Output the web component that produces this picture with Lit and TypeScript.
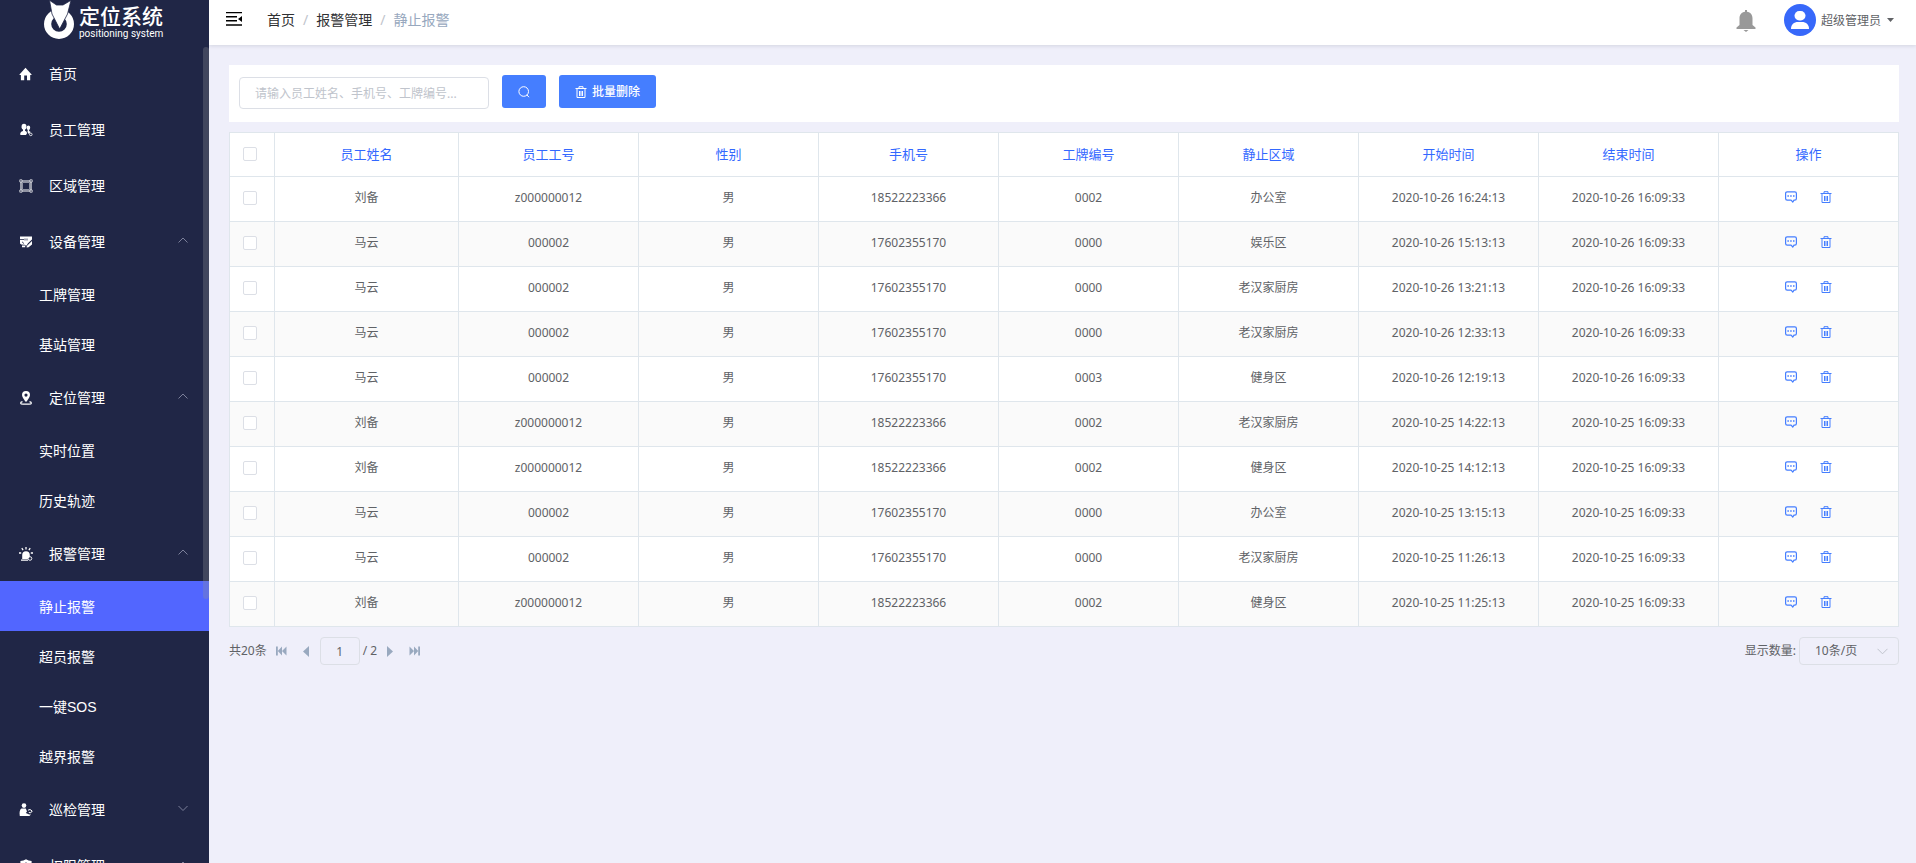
import { LitElement, html, css, svg, nothing } from "lit";
import { customElement, state } from "lit/decorators.js";
import { classMap } from "lit/directives/class-map.js";

interface Menu { label: string; icon: string; open?: boolean; children?: string[]; group?: boolean }

const MENUS: Menu[] = [
  { label: "首页", icon: "home" },
  { label: "员工管理", icon: "staff" },
  { label: "区域管理", icon: "area" },
  { label: "设备管理", icon: "device", group: true, open: true, children: ["工牌管理", "基站管理"] },
  { label: "定位管理", icon: "pin", group: true, open: true, children: ["实时位置", "历史轨迹"] },
  { label: "报警管理", icon: "alarm", group: true, open: true, children: ["静止报警", "超员报警", "一键SOS", "越界报警"] },
  { label: "巡检管理", icon: "patrol", group: true },
  { label: "权限管理", icon: "shield", group: true, open: true },
];

const COLUMNS = ["员工姓名", "员工工号", "性别", "手机号", "工牌编号", "静止区域", "开始时间", "结束时间"];

const liu = ["刘备", "z000000012", "男", "18522223366"];
const ma = ["马云", "000002", "男", "17602355170"];
const ROWS: string[][] = [
  [...liu, "0002", "办公室", "2020-10-26 16:24:13", "2020-10-26 16:09:33"],
  [...ma, "0000", "娱乐区", "2020-10-26 15:13:13", "2020-10-26 16:09:33"],
  [...ma, "0000", "老汉家厨房", "2020-10-26 13:21:13", "2020-10-26 16:09:33"],
  [...ma, "0000", "老汉家厨房", "2020-10-26 12:33:13", "2020-10-26 16:09:33"],
  [...ma, "0003", "健身区", "2020-10-26 12:19:13", "2020-10-26 16:09:33"],
  [...liu, "0002", "老汉家厨房", "2020-10-25 14:22:13", "2020-10-25 16:09:33"],
  [...liu, "0002", "健身区", "2020-10-25 14:12:13", "2020-10-25 16:09:33"],
  [...ma, "0000", "办公室", "2020-10-25 13:15:13", "2020-10-25 16:09:33"],
  [...ma, "0000", "老汉家厨房", "2020-10-25 11:26:13", "2020-10-25 16:09:33"],
  [...liu, "0002", "健身区", "2020-10-25 11:25:13", "2020-10-25 16:09:33"],
];

const GLYPHS: Record<string, unknown> = {
  home: svg`<path fill="currentColor" d="M6.500.8 12.600 7.400V8H11.200v5.200H8V8.600H5.200v4.600H1.900V8H.5V7.400Z"/>`,
  staff: svg`<g fill="currentColor"><ellipse cx="5" cy="3.8" rx="2.500" ry="3"/><path d="M4 6h2v1.800c1.400.6 2 1.400 2 2.400L7 12H1.400C.8 9.600 1.800 8.600 4 7.900Z"/><ellipse cx="9.400" cy="4.800" rx="1.800" ry="2.200"/><path d="M8.900 6.400h1.200v1.600l1.600.9-2 2-1.200-2Z"/></g><circle cx="11.800" cy="11.400" r="1.300" fill="none" stroke="currentColor" stroke-width=".8"/>`,
  area: svg`<g fill="none" stroke="currentColor"><path d="M3 2h8M3 12h8M2 3v8M12 3v8" stroke-width="1.100"/><path d="M3.500 3.500h7v7h-7z" stroke-width=".5"/><path d="M.8.8h2.200v2.200H.8zM11 .8h2.200v2.200H11zM.8 11h2.200v2.200H.8zM11 11h2.200v2.200H11z" stroke-width=".7"/></g>`,
  device: svg`<path fill="currentColor" d="M1 1.500h12v3L9 8.200 7.600 10.600H6.800L5.600 9.800 2.200 9.600 1 8.400ZM13 6v3.400L9.600 12.200 7.600 12.600l.2-1.600ZM3 10.600h3.200v1.600H3Z"/><path stroke="#202646" stroke-width=".8" fill="none" d="M1 4.500h4M6 3.500v2M8 3.500v2M3 6.800l2 1.800"/>`,
  pin: svg`<path fill="currentColor" fill-rule="evenodd" d="M7 0a4 4 0 0 1 4 4C11 6.600 8.400 8.600 7.800 10.600H6.200C5.600 8.600 3 6.600 3 4A4 4 0 0 1 7 0Zm0 2.500a1.600 1.600 0 1 0 0 3.200 1.600 1.600 0 0 0 0-3.200Z"/><path fill="none" stroke="currentColor" stroke-width="1.200" d="M3.500 10.600c-2.600.7-2.600 2.400.5 2.600h6c3.100-.2 3.100-1.900.5-2.600"/>`,
  alarm: svg`<path fill="currentColor" d="M3.200 12V8a3.800 3.800 0 0 1 7.600 0v1.400L8.600 12ZM2 12.400h7v1.400H2Z"/><path stroke="currentColor" stroke-width="1.300" fill="none" d="M7 0v2.400M2.800 1.200l1.300 1.900M11.200 1.200 9.900 3.100M0 6h2.200M14 6h-2.200"/><circle cx="11" cy="11.500" r="1.800" fill="none" stroke="currentColor" stroke-width=".9"/>`,
  patrol: svg`<circle cx="5" cy="2.600" r="2.300" fill="currentColor"/><path fill="currentColor" d="M2.400 5.400h4.400L8 8.400 6.800 10l3.400 1.400h1.800L10.400 13H.8C.2 8.800.8 6.600 2.400 5.400Z"/><path fill="none" stroke="currentColor" d="M9 7.200 11 6.500l2.200 1.500-1.400 1.800-2-.3"/>`,
  shield: svg`<path fill="currentColor" fill-rule="evenodd" d="M7 .2 9.600 1.600 12.600 2v5c0 3.200-2.600 5.400-5.600 6.600C4 12.400 1.400 10.200 1.400 7V2L4.400 1.600ZM7 3.600a2 2 0 1 0 .01 0Z"/>`,
};

const trash = svg`<path fill="none" stroke="currentColor" d="M.5 2.500h11M4 2.500v-1.800h4v1.800M2 3v8.500h8V3M4.500 5v5M6 5v5M7.500 5v5"/>`;

@customElement("app-root")
export class AppRoot extends LitElement {
  @state() private active = "静止报警";
  @state() private menus = MENUS;

  static styles = css`
    :host {
      display: grid;
      grid-template-columns: 209px minmax(0, 1fr);
      height: 100vh;
      overflow: hidden;
      background: #efeffa;
      color: #606266;
      font: 12px/18px "Noto Sans", "Noto Sans CJK SC", sans-serif;
    }
    * { box-sizing: border-box; }
    button, input, select { font: inherit; color: inherit; }
    button { border: 0; padding: 0; background: none; cursor: pointer; }
    svg { display: block; flex: none; }
    a { color: inherit; text-decoration: none; }
    ul { list-style: none; margin: 0; padding: 0; }

    .side { position: relative; background: #202646; color: #fff; overflow: hidden; display: flex; flex-direction: column; }
    .brand { height: 45px; flex: none; display: flex; gap: 5px; padding-left: 44px; }
    .names { display: flex; flex-direction: column; }
    .name { font-size: 21px; line-height: 24px; font-weight: 500; padding-top: 4px; }
    .sub { font: 10px/12px Roboto, sans-serif; }
    .menu { flex: 1; min-height: 0; overflow: hidden; font: 14px/20px "Liberation Sans", "Noto Sans CJK SC", sans-serif; }
    .item { display: flex; align-items: center; width: 100%; height: 56px; padding: 1px 20px 0 19px; text-align: left; }
    .item .text { padding: 0 0 0 16px; flex: 1; }
    .item .arrow { color: #7c809a; margin-bottom: 2px; }
    .leaf { display: flex; align-items: center; height: 50px; padding: 1px 0 0 39px; }
    .leaf.on { background: #5266ff; }
    .thumb { position: absolute; top: 47px; right: 0; width: 6px; height: 552px; border-radius: 3px; background: rgba(144, 147, 153, 0.3); }

    .main { display: flex; flex-direction: column; min-width: 0; }
    .top { display: flex; align-items: center; height: 45px; flex: none; padding: 0 22px 0 17px; background: #fff; box-shadow: 0 1px 4px rgba(0, 21, 41, 0.12); }
    .crumbs { display: flex; gap: 8px; flex: 1; padding: 0 0 5px 25px; font-size: 14px; line-height: 20px; color: #303133; }
    .crumbs .sep { color: #c0c4cc; }
    .crumbs .here { color: #97a8be; }
    .fold { padding-bottom: 7px; color: #000; }
    .bell { padding-bottom: 3px; margin-right: 28px; color: #999; }
    .user { display: flex; align-items: center; gap: 5px; padding-bottom: 5px; }
    .user .label { padding-top: 2px; }
    .user .caret { margin-left: 1px; }

    .body { padding: 20px 17px 20px 20px; }
    .tools { display: flex; gap: 13px; height: 57px; padding: 10px; background: #fff; }
    .query { width: 250px; height: 32px; margin-top: 2px; padding: 0 15px; border: 1px solid #dcdfe6; border-radius: 4px; background: #fff; outline: none; }
    .query::placeholder { color: #c0c4cc; opacity: 1; }
    .primary { display: flex; align-items: center; justify-content: center; gap: 5px; height: 33px; border-radius: 3px; background: #457eff; color: #fff; }
    .find { width: 44px; }
    .bulk { width: 97px; font-weight: 500; }

    .grid { width: 100%; margin-top: 10px; border-collapse: collapse; table-layout: fixed; background: #fff; text-align: center; }
    .grid th, .grid td { border: 1px solid #dfe6ec; padding: 0 0 2px; height: 45px; }
    .grid th { height: 44px; color: #3368ff; font-size: 13px; font-weight: 400; }
    .grid tbody tr:nth-child(even) { background: #fafafa; }
    .grid .pick { width: 45px; }
    .grid .who { width: 184px; }
    .box { appearance: none; display: block; width: 14px; height: 14px; margin: 0 0 0 13px; border: 1px solid #dcdfe6; border-radius: 2px; background: #fff; }
    .ops { display: flex; justify-content: center; gap: 23px; padding: 0 0 3px; color: #457eff; }

    .pager { display: flex; align-items: center; height: 28px; margin-top: 10px; }
    .pager .nav { color: #99a9bf; }
    .first { margin-left: 9px; }
    .prev { margin-left: 16px; }
    .page { width: 40px; height: 28px; margin: 0 3px 0 11px; text-align: center; border: 1px solid #dcdfe6; border-radius: 4px; background: transparent; padding: 0; }
    .next { margin-left: 10px; }
    .last { margin-left: 16px; }
    .size { display: flex; align-items: center; gap: 3px; margin-left: auto; }
    .pick-size { position: relative; display: flex; align-items: center; }
    .pick-size select { appearance: none; width: 100px; height: 28px; padding: 0 15px; border: 1px solid #dcdfe6; border-radius: 4px; background: transparent; }
    .pick-size svg { position: absolute; right: 11px; color: #c0c4cc; pointer-events: none; }
  `;

  private toggle(i: number) {
    this.menus = this.menus.map((m, k) => (k === i ? { ...m, open: !m.open } : m));
  }

  private renderMenu(m: Menu, i: number) {
    const glyph = html`<svg width="14" height="14" viewBox="0 0 14 14" aria-hidden="true">${GLYPHS[m.icon]}</svg><span class="text">${m.label}</span>`;
    return html`<li>
      ${m.group
        ? html`<button class="item" aria-expanded=${m.open ? "true" : "false"} @click=${() => this.toggle(i)}>
            ${glyph}
            <svg class="arrow" width="12" height="12" viewBox="0 0 12 12"><path fill="none" stroke="currentColor" d=${m.open ? "M1.5 7.5 6 3l4.5 4.5" : "M1.5 3 6 7.5 10.5 3"} /></svg>
          </button>`
        : html`<a class="item" href="#">${glyph}</a>`}
      ${m.open && m.children
        ? html`<ul>${m.children.map((c) => html`<li><a href="#" class=${classMap({ leaf: true, on: c === this.active })} @click=${() => (this.active = c)}>${c}</a></li>`)}</ul>`
        : nothing}
    </li>`;
  }

  render() {
    return html`
      <aside class="side">
        <div class="brand">
          <svg width="30" height="40" viewBox="0 0 30 40" aria-hidden="true">
            <circle cx="15" cy="24" r="11.4" fill="none" stroke="#fff" stroke-width="7.2" />
            <path fill="#fff" stroke="#202646" stroke-width=".8" d="M5.500.3 12.500 5h6.500L27 .3 23.500 14 15.700 29 8 14Z" />
          </svg>
          <div class="names"><span class="name">定位系统</span><span class="sub">positioning system</span></div>
        </div>
        <nav class="menu"><ul>${this.menus.map((m, i) => this.renderMenu(m, i))}</ul></nav>
        <div class="thumb"></div>
      </aside>
      <div class="main">
        <header class="top">
          <button class="fold" aria-label="收起菜单">
            <svg width="16" height="14" viewBox="0 0 16 14"><path fill="currentColor" d="M0 0h16v1.300H0zM0 4h11v1.500H0zM0 8h11v1.500H0zM0 12.200h16v1.500H0zM16 4v6l-4-3z" /></svg>
          </button>
          <nav class="crumbs">
            <a href="#">首页</a><span class="sep">/</span><a href="#">报警管理</a><span class="sep">/</span><span class="here">静止报警</span>
          </nav>
          <button class="bell" aria-label="通知">
            <svg width="20" height="22" viewBox="0 0 20 22"><path fill="currentColor" d="M9 0h2v1.800c3.500.5 5.500 3 5.500 6.700V15l3 2.500V19H.5v-1.500l3-2.500V8.500C3.500 4.800 5.500 2.300 9 1.800ZM7.500 20h5L10 22Z" /></svg>
          </button>
          <button class="user">
            <svg width="32" height="32" viewBox="0 0 32 32"><circle cx="16" cy="16" r="16" fill="#3768fa" /><rect x="10.500" y="7" width="11" height="9.500" rx="4.700" fill="#fff" /><path fill="#fff" d="M7 25c0-4.800 3-7 7-7h4c4 0 7 2.200 7 7Z" /></svg>
            <span class="label">超级管理员</span>
            <svg class="caret" width="7" height="4" viewBox="0 0 7 4"><path fill="currentColor" d="M0 0h7L3.500 4z" /></svg>
          </button>
        </header>
        <main class="body">
          <form class="tools" @submit=${(e: Event) => e.preventDefault()}>
            <input class="query" type="text" aria-label="搜索" placeholder="请输入员工姓名、手机号、工牌编号..." />
            <button class="primary find" aria-label="查询">
              <svg width="12" height="12" viewBox="0 0 12 12"><circle cx="5.700" cy="5.500" r="4.800" fill="none" stroke="currentColor" /><path stroke="currentColor" d="m8.800 8.800 2.200 2.400" /></svg>
            </button>
            <button class="primary bulk" type="button"><svg width="12" height="12" viewBox="0 0 12 12">${trash}</svg>批量删除</button>
          </form>
          <table class="grid">
            <thead>
              <tr>
                <th class="pick"><input class="box" type="checkbox" aria-label="全选" /></th>
                ${COLUMNS.map((c, i) => html`<th class=${i === 0 ? "who" : ""}>${c}</th>`)}
                <th>操作</th>
              </tr>
            </thead>
            <tbody>
              ${ROWS.map((r) => html`<tr>
                <td><input class="box" type="checkbox" aria-label="选择" /></td>
                ${r.map((c) => html`<td>${c}</td>`)}
                <td><div class="ops">
                  <button aria-label="备注"><svg width="12" height="12" viewBox="0 0 12 12"><path fill="none" stroke="currentColor" stroke-width="1.200" d="M2.200.8h7.600q1.600 0 1.600 1.600v5.200q0 1.600-1.600 1.600H9L7.800 11 6 9.200H2.200Q.6 9.200.6 7.600V2.400Q.6.800 2.200.8Z" /><path fill="currentColor" d="M2.400 4.200h1.500v1.500H2.400zM5.200 4.200h1.500v1.500H5.200zM8 4.200h1.500v1.500H8z" /></svg></button>
                  <button aria-label="删除"><svg width="12" height="12" viewBox="0 0 12 12">${trash}</svg></button>
                </div></td>
              </tr>`)}
            </tbody>
          </table>
          <div class="pager">
            <span>共20条</span>
            <button class="nav first" aria-label="首页"><svg width="11" height="10" viewBox="0 0 11 10"><path fill="currentColor" d="M0 .5h1.800v9H0zM6 .5v9L1.800 5zM10.500.5v9L6 5z" /></svg></button>
            <button class="nav prev" aria-label="上一页"><svg width="6" height="11" viewBox="0 0 6 11"><path fill="currentColor" d="M6 0v11L0 5.500z" /></svg></button>
            <input class="page" type="text" aria-label="页码" value="1" />
            <span>/ 2</span>
            <button class="nav next" aria-label="下一页"><svg width="6" height="11" viewBox="0 0 6 11"><path fill="currentColor" d="M0 0v11l6-5.500z" /></svg></button>
            <button class="nav last" aria-label="末页"><svg width="11" height="10" viewBox="0 0 11 10"><path fill="currentColor" d="M11 .5H9.200v9H11zM5 .5v9L9.200 5zM.5.5v9L5 5z" /></svg></button>
            <label class="size">显示数量:
              <span class="pick-size">
                <select><option>10条/页</option><option>20条/页</option><option>50条/页</option></select>
                <svg width="11" height="7" viewBox="0 0 11 7"><path fill="none" stroke="currentColor" d="m.5.800 5 5 5-5" /></svg>
              </span>
            </label>
          </div>
        </main>
      </div>
    `;
  }
}
